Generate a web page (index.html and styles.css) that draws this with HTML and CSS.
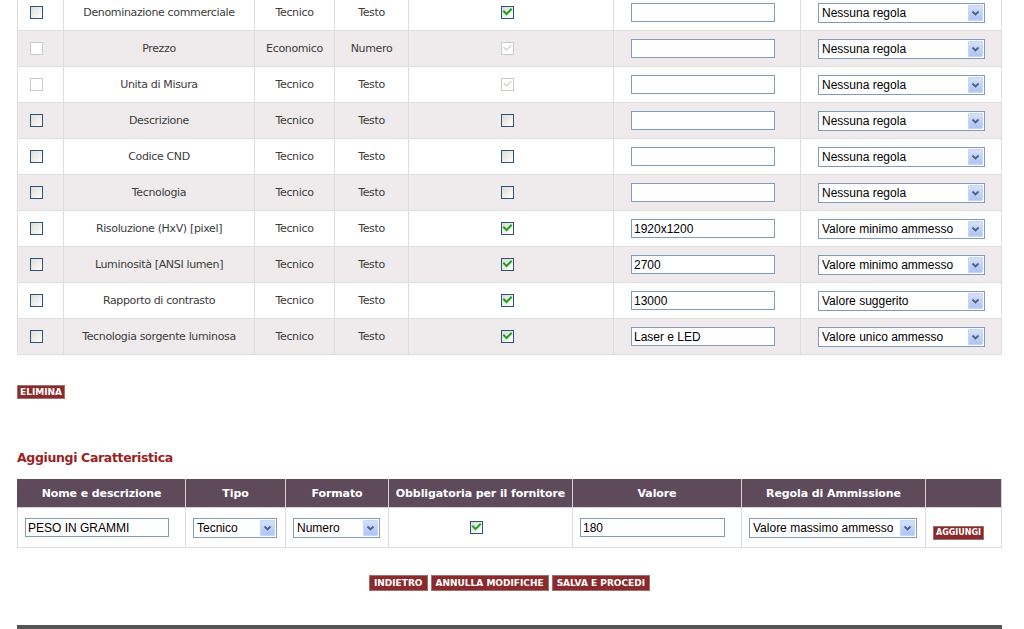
FILE: index.html
```html
<!DOCTYPE html>
<html lang="it">
<head>
<meta charset="utf-8">
<title>Caratteristiche</title>
<link rel="stylesheet" href="styles.css">
</head>
<body>
<div class="page">
  <table class="grid list">
    <colgroup>
      <col class="c1"><col class="c2"><col class="c3"><col class="c4"><col class="c5"><col class="c6"><col class="c7">
    </colgroup>
    <tbody>
      <tr>
        <td class="sel-cell"><span class="cb"></span></td>
        <td>Denominazione commerciale</td><td>Tecnico</td><td>Testo</td>
        <td class="mid"><span class="cb on"><svg viewBox="0 0 11 11"><path d="M2 4.5 L4.5 7 L9 2.5"/></svg></span></td>
        <td class="in-cell"><input class="txt" type="text" value=""></td>
        <td class="in-cell"><span class="sel"><select><option>Nessuna regola</option></select><span class="sel-arrow"><svg viewBox="0 0 15 16"><path d="M4.5 6.5 L7.5 9.5 L10.5 6.5"/></svg></span></span></td>
      </tr>
      <tr class="alt">
        <td class="sel-cell"><span class="cb dis"></span></td>
        <td>Prezzo</td><td>Economico</td><td>Numero</td>
        <td class="mid"><span class="cb dis on"><svg viewBox="0 0 11 11"><path d="M2 4.5 L4.5 7 L9 2.5"/></svg></span></td>
        <td class="in-cell"><input class="txt" type="text" value=""></td>
        <td class="in-cell"><span class="sel"><select><option>Nessuna regola</option></select><span class="sel-arrow"><svg viewBox="0 0 15 16"><path d="M4.5 6.5 L7.5 9.5 L10.5 6.5"/></svg></span></span></td>
      </tr>
      <tr>
        <td class="sel-cell"><span class="cb dis"></span></td>
        <td>Unita di Misura</td><td>Tecnico</td><td>Testo</td>
        <td class="mid"><span class="cb dis on"><svg viewBox="0 0 11 11"><path d="M2 4.5 L4.5 7 L9 2.5"/></svg></span></td>
        <td class="in-cell"><input class="txt" type="text" value=""></td>
        <td class="in-cell"><span class="sel"><select><option>Nessuna regola</option></select><span class="sel-arrow"><svg viewBox="0 0 15 16"><path d="M4.5 6.5 L7.5 9.5 L10.5 6.5"/></svg></span></span></td>
      </tr>
      <tr class="alt">
        <td class="sel-cell"><span class="cb"></span></td>
        <td>Descrizione</td><td>Tecnico</td><td>Testo</td>
        <td class="mid"><span class="cb"></span></td>
        <td class="in-cell"><input class="txt" type="text" value=""></td>
        <td class="in-cell"><span class="sel"><select><option>Nessuna regola</option></select><span class="sel-arrow"><svg viewBox="0 0 15 16"><path d="M4.5 6.5 L7.5 9.5 L10.5 6.5"/></svg></span></span></td>
      </tr>
      <tr>
        <td class="sel-cell"><span class="cb"></span></td>
        <td>Codice CND</td><td>Tecnico</td><td>Testo</td>
        <td class="mid"><span class="cb"></span></td>
        <td class="in-cell"><input class="txt" type="text" value=""></td>
        <td class="in-cell"><span class="sel"><select><option>Nessuna regola</option></select><span class="sel-arrow"><svg viewBox="0 0 15 16"><path d="M4.5 6.5 L7.5 9.5 L10.5 6.5"/></svg></span></span></td>
      </tr>
      <tr class="alt">
        <td class="sel-cell"><span class="cb"></span></td>
        <td>Tecnologia</td><td>Tecnico</td><td>Testo</td>
        <td class="mid"><span class="cb"></span></td>
        <td class="in-cell"><input class="txt" type="text" value=""></td>
        <td class="in-cell"><span class="sel"><select><option>Nessuna regola</option></select><span class="sel-arrow"><svg viewBox="0 0 15 16"><path d="M4.5 6.5 L7.5 9.5 L10.5 6.5"/></svg></span></span></td>
      </tr>
      <tr>
        <td class="sel-cell"><span class="cb"></span></td>
        <td>Risoluzione (HxV) [pixel]</td><td>Tecnico</td><td>Testo</td>
        <td class="mid"><span class="cb on"><svg viewBox="0 0 11 11"><path d="M2 4.5 L4.5 7 L9 2.5"/></svg></span></td>
        <td class="in-cell"><input class="txt" type="text" value="1920x1200"></td>
        <td class="in-cell"><span class="sel"><select><option>Valore minimo ammesso</option></select><span class="sel-arrow"><svg viewBox="0 0 15 16"><path d="M4.5 6.5 L7.5 9.5 L10.5 6.5"/></svg></span></span></td>
      </tr>
      <tr class="alt">
        <td class="sel-cell"><span class="cb"></span></td>
        <td>Luminosità [ANSI lumen]</td><td>Tecnico</td><td>Testo</td>
        <td class="mid"><span class="cb on"><svg viewBox="0 0 11 11"><path d="M2 4.5 L4.5 7 L9 2.5"/></svg></span></td>
        <td class="in-cell"><input class="txt" type="text" value="2700"></td>
        <td class="in-cell"><span class="sel"><select><option>Valore minimo ammesso</option></select><span class="sel-arrow"><svg viewBox="0 0 15 16"><path d="M4.5 6.5 L7.5 9.5 L10.5 6.5"/></svg></span></span></td>
      </tr>
      <tr>
        <td class="sel-cell"><span class="cb"></span></td>
        <td>Rapporto di contrasto</td><td>Tecnico</td><td>Testo</td>
        <td class="mid"><span class="cb on"><svg viewBox="0 0 11 11"><path d="M2 4.5 L4.5 7 L9 2.5"/></svg></span></td>
        <td class="in-cell"><input class="txt" type="text" value="13000"></td>
        <td class="in-cell"><span class="sel"><select><option>Valore suggerito</option></select><span class="sel-arrow"><svg viewBox="0 0 15 16"><path d="M4.5 6.5 L7.5 9.5 L10.5 6.5"/></svg></span></span></td>
      </tr>
      <tr class="alt">
        <td class="sel-cell"><span class="cb"></span></td>
        <td>Tecnologia sorgente luminosa</td><td>Tecnico</td><td>Testo</td>
        <td class="mid"><span class="cb on"><svg viewBox="0 0 11 11"><path d="M2 4.5 L4.5 7 L9 2.5"/></svg></span></td>
        <td class="in-cell"><input class="txt" type="text" value="Laser e LED"></td>
        <td class="in-cell"><span class="sel"><select><option>Valore unico ammesso</option></select><span class="sel-arrow"><svg viewBox="0 0 15 16"><path d="M4.5 6.5 L7.5 9.5 L10.5 6.5"/></svg></span></span></td>
      </tr>
    </tbody>
  </table>

  <div class="actions-left"><button class="btn btn-sm" type="button">ELIMINA</button></div>

  <h2 class="section-title">Aggiungi Caratteristica</h2>

  <table class="grid add">
    <colgroup>
      <col class="a1"><col class="a2"><col class="a3"><col class="a4"><col class="a5"><col class="a6"><col class="a7">
    </colgroup>
    <thead>
      <tr>
        <th>Nome e descrizione</th><th>Tipo</th><th>Formato</th><th>Obbligatoria per il fornitore</th><th>Valore</th><th>Regola di Ammissione</th><th></th>
      </tr>
    </thead>
    <tbody>
      <tr>
        <td class="left"><input class="txt name" type="text" value="PESO IN GRAMMI"></td>
        <td class="left"><span class="sel tipo"><select><option>Tecnico</option></select><span class="sel-arrow"><svg viewBox="0 0 15 16"><path d="M4.5 6.5 L7.5 9.5 L10.5 6.5"/></svg></span></span></td>
        <td class="left"><span class="sel formato"><select><option>Numero</option></select><span class="sel-arrow"><svg viewBox="0 0 15 16"><path d="M4.5 6.5 L7.5 9.5 L10.5 6.5"/></svg></span></span></td>
        <td class="mid"><span class="cb on"><svg viewBox="0 0 11 11"><path d="M2 4.5 L4.5 7 L9 2.5"/></svg></span></td>
        <td class="left"><input class="txt valore" type="text" value="180"></td>
        <td class="left"><span class="sel regola"><select><option>Valore massimo ammesso</option></select><span class="sel-arrow"><svg viewBox="0 0 15 16"><path d="M4.5 6.5 L7.5 9.5 L10.5 6.5"/></svg></span></span></td>
        <td class="left btn-cell"><button class="btn btn-xs" type="button">AGGIUNGI</button></td>
      </tr>
    </tbody>
  </table>

  <div class="actions-center">
    <button class="btn" type="button">INDIETRO</button>
    <button class="btn" type="button">ANNULLA MODIFICHE</button>
    <button class="btn" type="button">SALVA E PROCEDI</button>
  </div>

  <div class="footer-bar"></div>
</div>
</body>
</html>
```

FILE: styles.css
```css
html, body {
  margin: 0;
  padding: 0;
  background: #ffffff;
  overflow: hidden;
}

body {
  font-family: "DejaVu Sans", Verdana, sans-serif;
  font-size: 11px;
  color: #3c3c3c;
}

.page {
  width: 985px;
  margin: -5px 0 0 17px;
}

.grid {
  width: 985px;
  table-layout: fixed;
  border-collapse: separate;
  border-spacing: 0;
}

.grid td,
.grid th {
  box-sizing: border-box;
  padding: 0;
  text-align: center;
  vertical-align: middle;
  border-right: 1px solid #dedcdc;
  border-bottom: 1px solid #dedcdc;
}

.grid td:first-child,
.grid th:first-child {
  border-left: 1px solid #dedcdc;
}

.list td {
  height: 36px;
  letter-spacing: -0.35px;
}

.list tr.alt td {
  background: #efebec;
}

.c1 { width: 47px; }
.c2 { width: 191px; }
.c3 { width: 80px; }
.c4 { width: 74px; }
.c5 { width: 205px; }
.c6 { width: 187px; }
.c7 { width: 201px; }

.a1 { width: 169px; }
.a2 { width: 100px; }
.a3 { width: 103px; }
.a4 { width: 184px; }
.a5 { width: 169px; }
.a6 { width: 184px; }
.a7 { width: 76px; }

.sel-cell {
  text-align: left !important;
  padding-left: 12px !important;
}

.mid {
  padding-right: 8px !important;
}

.in-cell {
  text-align: left !important;
  padding-left: 17px !important;
  letter-spacing: normal !important;
}

/* checkboxes */
.cb {
  display: inline-block;
  box-sizing: border-box;
  width: 13px;
  height: 13px;
  border: 1px solid #2e5477;
  background: linear-gradient(135deg, #dcdcd6 0%, #f4f4f1 70%, #ffffff 100%);
  vertical-align: middle;
  position: relative;
}

.cb svg {
  display: block;
  width: 11px;
  height: 11px;
}

.cb svg path {
  fill: none;
  stroke: #21a121;
  stroke-width: 2;
  stroke-linecap: square;
  stroke-linejoin: miter;
}

.cb.dis {
  border-color: #cdccc4;
  background: #ffffff;
}

.cb.dis svg path {
  stroke: #cdccc4;
  stroke-width: 1.2;
}

/* text inputs */
.txt {
  box-sizing: border-box;
  width: 144px;
  height: 19px;
  margin: 0;
  padding: 0 2px;
  border: 1px solid #7f9db9;
  border-radius: 0;
  background: #ffffff;
  font-family: "Liberation Sans", Arial, sans-serif;
  font-size: 12px;
  color: #000000;
  vertical-align: middle;
  outline: none;
}

/* selects */
.sel {
  position: relative;
  display: inline-block;
  width: 167px;
  height: 20px;
  vertical-align: middle;
}

.sel select {
  -webkit-appearance: none;
  appearance: none;
  box-sizing: border-box;
  width: 100%;
  height: 100%;
  margin: 0;
  padding: 0 18px 0 3px;
  border: 1px solid #7f9db9;
  border-radius: 0;
  background: #ffffff;
  font-family: "Liberation Sans", Arial, sans-serif;
  font-size: 12px;
  color: #000000;
  outline: none;
}

.sel-arrow {
  position: absolute;
  right: 2px;
  top: 2px;
  width: 15px;
  height: 16px;
  box-sizing: border-box;
  border: 1px solid #c3d3fd;
  border-radius: 1px;
  background: linear-gradient(180deg, #d6e1fd 0%, #bccff8 60%, #b0c5f3 100%);
  pointer-events: none;
}

.sel-arrow svg {
  position: absolute;
  left: -1px;
  top: -1px;
  width: 15px;
  height: 16px;
}

.sel-arrow svg path {
  fill: none;
  stroke: #4d6185;
  stroke-width: 1.8;
}

/* buttons */
.btn {
  display: inline-block;
  box-sizing: border-box;
  height: 16px;
  margin: 0;
  padding: 0 4px;
  border: 1px solid #a07070;
  background: #8b2a2d;
  color: #ffffff;
  font-family: "DejaVu Sans", Verdana, sans-serif;
  font-weight: bold;
  font-size: 9px;
  line-height: 14px;
  border-radius: 0;
  vertical-align: middle;
  cursor: pointer;
}

.btn-sm {
  height: 14px;
  line-height: 12px;
  padding: 0 2px;
}

.btn-xs {
  height: 14px;
  line-height: 12px;
  padding: 0 2px;
  font-size: 8px;
}

.actions-left {
  margin-top: 30px;
  height: 14px;
  display: flex;
}

.section-title {
  margin: 51px 0 0 0;
  font-size: 12.5px;
  line-height: 15px;
  letter-spacing: -0.35px;
  font-weight: bold;
  color: #9c1f22;
}

.add {
  margin-top: 14px;
}

.add th {
  height: 29px;
  background: #5e4a5a;
  color: #ffffff;
  font-weight: bold;
  font-size: 11px;
  letter-spacing: -0.1px;
  border-right: 1px solid #d8d2d6;
  border-bottom: 1px solid #d8d2d6;
}

.add th:first-child {
  border-left: 1px solid #5e4a5a;
}

.add td {
  height: 40px;
  background: #ffffff;
}

.add td.left {
  text-align: left;
  padding-left: 7px;
}

.add td.btn-cell {
  padding-top: 10px;
}

.txt.name { width: 144px; }
.txt.valore { width: 145px; }
.sel.tipo { width: 84px; }
.sel.formato { width: 87px; }
.sel.regola { width: 168px; }

.actions-center {
  margin-top: 27px;
  display: flex;
  justify-content: center;
  gap: 3px;
}

.footer-bar {
  margin-top: 34px;
  height: 6px;
  background: #555555;
}
```
